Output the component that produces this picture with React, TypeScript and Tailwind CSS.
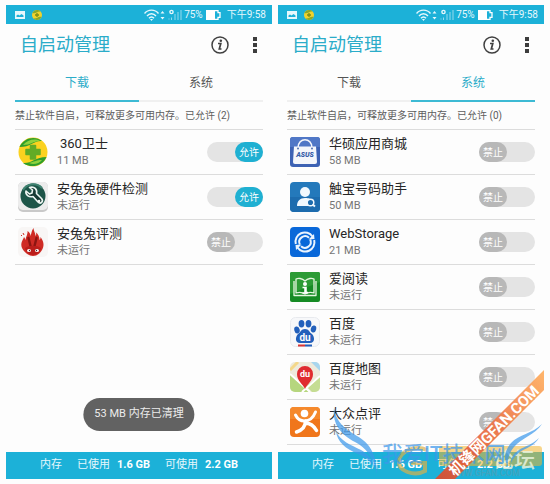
import React, { useState } from 'react';

type Tab = 'downloads' | 'system';

interface AppEntry {
  name: string;
  status: string;
  allowed: boolean;
  icon: React.ReactNode;
  indent?: boolean;
}

const Guard360Icon = () => (
  <svg viewBox="0 0 30 30" className="size-[30px]" aria-hidden="true">
    <circle cx="15" cy="15" r="14.5" fill="#fbd21f" />
    <path d="M1.500 10C5 1 17-2 24 4c-8-1-11 6-22.500 6z" fill="#2f9e2b" />
    <path d="M5 8C9 3 17 1 22 4c-7 0-9 4-17 4z" fill="#8ed23c" />
    <path d="M28.500 20C25 29 13 32 5 26c8 1 12-6 23.500-6z" fill="#2f9e2b" />
    <path d="M24 23c-3 4-9 5-13 3 5-1 7-3 13-3z" fill="#8ed23c" />
    <path d="M12.500 8.500h5v4H22v5h-4.500v4.500h-5v-4.500H8v-5h4.500z" fill="#62ab26" stroke="#62ab26" strokeWidth="1.500" strokeLinejoin="round" />
  </svg>
);

const WrenchIcon = () => (
  <svg viewBox="0 0 30 30" className="size-[30px]" aria-hidden="true">
    <rect x="0" y="0" width="30" height="30" rx="5" fill="#c9c9c9" />
    <rect x="0" y="0" width="30" height="28" rx="5" fill="#ececec" />
    <circle cx="15" cy="14" r="12.500" fill="#1d5548" />
    <path d="M5 8a12 12 0 0 1 19-2" fill="none" stroke="#3f8371" strokeWidth="2" />
    <path
      d="M8 9l3.500 3 2.500-1 .5-3-3-2.500c5-1.500 8 2 7 6l5 5c2.500 3-1 6-3.500 3.500l-5-5.500c-4 1-8-1.500-7-5.500z"
      fill="#183a34"
      stroke="#eef6f3"
      strokeWidth="1.600"
      strokeLinejoin="round"
    />
    <circle cx="21" cy="19" r="1.300" fill="#eef6f3" />
  </svg>
);

const AntutuIcon = () => (
  <svg viewBox="0 0 30 30" className="size-[30px]" aria-hidden="true">
    <rect width="30" height="30" rx="5" fill="#f8f6f5" />
    <path
      d="M4 21c-2-5 1-8 2-11 1 1 1 2 1.500 3C8 9 10 7 9.500 4c2 1 3 3 3 5 1-3 1-5 3-8 0 3 2 5 2 8 1-1 1-3 0-4 3 2 4 5 4 8 1-1 1-2 1-3 3 4 4 8 2 12-2 4-5 7-9.500 7S6 25 4 21z"
      fill="#cf2b25"
    />
    <path d="M10.500 11l2 8M18.500 11l-2 8" stroke="#8c1512" strokeWidth="2.400" strokeLinecap="round" />
    <path d="M7 21c4-3 12-3 16 0-1 4-4 7-8 7s-7-3-8-7z" fill="#bb1e1b" />
    <ellipse cx="11" cy="23.500" rx="2" ry="1.500" fill="#fff" />
    <ellipse cx="19" cy="23.500" rx="2" ry="1.500" fill="#fff" />
    <circle cx="11.500" cy="23.500" r=".7" fill="#333" />
    <circle cx="18.500" cy="23.500" r=".7" fill="#333" />
    <path d="M5 6l1 2M3 8l1 1" stroke="#cf2b25" strokeWidth="1" />
  </svg>
);

const AsusIcon = () => (
  <svg viewBox="0 0 30 30" className="size-[30px]" aria-hidden="true">
    <rect width="30" height="30" rx="3" fill="#3d62b4" />
    <path d="M0 3a3 3 0 0 1 3-3h24a3 3 0 0 1 3 3v7H0z" fill="#5077c6" />
    <path d="M4 9.500h22l1 15.500a2 2 0 0 1-2 2H5a2 2 0 0 1-2-2z" fill="#f4f6fb" />
    <path d="M8 11C8 0 22 0 22 11" fill="none" stroke="#f4f6fb" strokeWidth="1.600" />
    <circle cx="8" cy="11.500" r="1" fill="#5472b0" />
    <circle cx="22" cy="11.500" r="1" fill="#5472b0" />
    <text x="15" y="19.500" textAnchor="middle" fontSize="7" fontWeight="900" fontStyle="italic" fill="#365ca8">ASUS</text>
  </svg>
);

const ContactIcon = () => (
  <svg viewBox="0 0 30 30" className="size-[30px]" aria-hidden="true">
    <rect width="30" height="30" rx="4" fill="#2479bb" />
    <path d="M0 15h30v11a4 4 0 0 1-4 4H4a4 4 0 0 1-4-4z" fill="#1d6cae" />
    <circle cx="15" cy="10" r="5" fill="#f1f8fd" />
    <path d="M7 24c0-5 3-8 8-8s5 1 6 2l-3 6z" fill="#f1f8fd" />
    <circle cx="20.500" cy="20.500" r="3.300" fill="#1d6cae" stroke="#f1f8fd" strokeWidth="1.500" />
    <path d="M22.500 22.500l2.500 2" stroke="#f1f8fd" strokeWidth="2" />
  </svg>
);

const StorageIcon = () => (
  <svg viewBox="0 0 30 30" className="size-[30px]" aria-hidden="true">
    <rect width="30" height="30" rx="4" fill="#0968d9" />
    <g fill="none" stroke="#eaf4ff">
      <path d="M5.800 17A9.300 9.300 0 0 1 22.500 9.500M24.200 13A9.300 9.300 0 0 1 7.500 20.500" strokeWidth="2" />
      <path d="M9.800 17.500A5.800 5.800 0 0 1 19 10.800M20.200 12.500A5.800 5.800 0 0 1 11 19.200" strokeWidth="2" />
    </g>
    <path d="M18.500 12.500l6-.5-.5-5zM11.500 17.500l-6 .5.5 5z" fill="#eaf4ff" />
  </svg>
);

const ReaderIcon = () => (
  <svg viewBox="0 0 30 30" className="size-[30px]" aria-hidden="true">
    <rect width="30" height="30" rx="2" fill="#168b24" />
    <path d="M0 2a2 2 0 0 1 2-2h26a2 2 0 0 1 2 2v8L0 22z" fill="#2c9b35" />
    <g fill="none" stroke="#e5f6df" strokeWidth="1.300" strokeLinejoin="round">
      <path d="M15 9C12 6 8 6 6 7v14c3-1 6-1 9 1 3-2 6-2 9-1V7c-2-1-6-1-9 2z" />
      <path d="M4 9v14.500h22V9" />
    </g>
    <circle cx="15" cy="12" r="2" fill="#fff" />
    <path d="M12.500 15.500H16v5h2M15 16v5M12.500 21h5" stroke="#fff" strokeWidth="1.600" fill="none" />
  </svg>
);

const BaiduIcon = () => (
  <svg viewBox="0 0 30 30" className="size-[30px]" aria-hidden="true">
    <rect x=".5" y=".5" width="29" height="29" rx="5" fill="#f7f8fa" stroke="#e8eaee" />
    <g fill="#2360bb">
      <ellipse cx="7" cy="13" rx="2.700" ry="3.500" transform="rotate(-15 7 13)" />
      <ellipse cx="11.500" cy="6.700" rx="2.900" ry="3.700" />
      <ellipse cx="18.500" cy="6.700" rx="2.900" ry="3.700" />
      <ellipse cx="23.500" cy="12" rx="2.700" ry="3.500" transform="rotate(15 23.500 12)" />
      <path d="M15 12c4 0 4 3 7 5 3 3 3 9-2 9H10c-5 0-5-6-2-9 3-2 3-5 7-5z" />
    </g>
    <text x="15" y="24" textAnchor="middle" fontSize="10" fontWeight="700" fill="#fff">du</text>
    <path d="M8 28.500h7" stroke="#d93535" strokeWidth="2" />
    <path d="M15 28.500h7" stroke="#2360bb" strokeWidth="2" />
  </svg>
);

const MapIcon = () => (
  <svg viewBox="0 0 30 30" className="size-[30px]" aria-hidden="true">
    <clipPath id="map-clip"><rect width="30" height="30" rx="5" /></clipPath>
    <g clipPath="url(#map-clip)">
      <rect width="30" height="30" fill="#eeeadc" />
      <path d="M0 12l20 18H0z" fill="#b6d67e" />
      <path d="M30 14v16h-8l-6-6z" fill="#c5dd93" />
      <path d="M21 0h9v9z" fill="#a8d6ee" />
      <path d="M0 12l20 18M30 14L12 30" stroke="#fff" strokeWidth="2" />
      <path d="M0 8l8-8" stroke="#f4d88a" strokeWidth="3" />
    </g>
    <path d="M15 27c-2-5-8-8-8-15a8 8 0 0 1 16 0c0 7-6 10-8 15z" fill="#e02c30" />
    <text x="15" y="15" textAnchor="middle" fontSize="9" fontWeight="700" fill="#fff">du</text>
  </svg>
);

const DianpingIcon = () => (
  <svg viewBox="0 0 30 30" className="size-[30px]" aria-hidden="true">
    <rect width="30" height="30" rx="4" fill="#f0761b" />
    <path d="M0 4a4 4 0 0 1 4-4h22a4 4 0 0 1 4 4v8H0z" fill="#f5892c" />
    <circle cx="14.500" cy="6.500" r="3.800" fill="#fff" />
    <path d="M5.500 8c2 4 5 6 9 6 5 0 9-4 11-9" fill="none" stroke="#fff" strokeWidth="3" strokeLinecap="round" />
    <path d="M15.500 14c0 5-3 9-9 11M15 16c5 0 9 3 11.500 7.500" fill="none" stroke="#fff" strokeWidth="3.500" strokeLinecap="round" />
  </svg>
);

const DOWNLOADS: AppEntry[] = [
  { name: '360卫士', status: '11 MB', allowed: true, icon: <Guard360Icon />, indent: true },
  { name: '安兔兔硬件检测', status: '未运行', allowed: true, icon: <WrenchIcon /> },
  { name: '安兔兔评测', status: '未运行', allowed: false, icon: <AntutuIcon /> },
];

const SYSTEM: AppEntry[] = [
  { name: '华硕应用商城', status: '58 MB', allowed: false, icon: <AsusIcon /> },
  { name: '触宝号码助手', status: '50 MB', allowed: false, icon: <ContactIcon /> },
  { name: 'WebStorage', status: '21 MB', allowed: false, icon: <StorageIcon /> },
  { name: '爱阅读', status: '未运行', allowed: false, icon: <ReaderIcon /> },
  { name: '百度', status: '未运行', allowed: false, icon: <BaiduIcon /> },
  { name: '百度地图', status: '未运行', allowed: false, icon: <MapIcon /> },
  { name: '大众点评', status: '未运行', allowed: false, icon: <DianpingIcon /> },
];

const StatusBar = () => (
  <div className="flex h-[19px] items-center bg-[#1cb1d8] pr-[6px] pl-[9px] text-[10px] text-[#e6f7fc]">
    <svg viewBox="0 0 10 8" className="h-2 w-[10px]" aria-hidden="true">
      <rect width="10" height="8" fill="#e6f7fc" />
      <path d="M1.500 6V4.500l1.500-1 1.500 1L6.500 3l2 1.500V6z" fill="#1cb1d8" />
    </svg>
    <svg viewBox="0 0 12 10" className="ml-[6px] h-[10px] w-3" aria-hidden="true">
      <circle cx="6" cy="5" r="5" fill="#f1d22c" />
      <path d="M1.500 3C3 0 7-1 9.500 1.500 6 1 5 4 1.500 3zM10.500 7C9 10 5 11 2.500 8.500 6 9 7 6 10.500 7z" fill="#8aa82c" />
      <path d="M6 3v4M4 5h4" stroke="#7c8f17" strokeWidth="1.300" />
    </svg>
    <div className="ml-auto flex items-center">
      <svg viewBox="0 0 40 12" className="h-3 w-10" aria-hidden="true">
        <g fill="none" stroke="#e6f7fc" strokeWidth="1.400">
          <path d="M.5 4.500c3.500-4.500 10.500-4.500 14 0M3 7c2.500-3 6.500-3 9 0M5 9.300c1.500-1.800 3.500-1.800 5 0" />
          <circle cx="27.500" cy="3" r="1.600" />
        </g>
        <path d="M6 10h3l-1.500 2zM18.500 2l2 2.500h-4zM18.500 10.500l2-2.500h-4z" fill="#e6f7fc" />
        <path d="M25 9.500v1M27.500 8.500v2.500M31 5v6M34 3v8M37 1v10" stroke="#e6f7fc" strokeOpacity=".6" />
      </svg>
      <span>75%</span>
      <svg viewBox="0 0 15 10" className="ml-[3px] h-[10px] w-[15px]" aria-hidden="true">
        <path d="M0 0h9v10H0z" fill="#fff" />
        <path d="M9 .7h3v2h2v4.600h-2v2H9" fill="none" stroke="#fff" strokeWidth="1.300" />
      </svg>
      <span className="ml-[6px]">下午9:58</span>
    </div>
  </div>
);

const TitleBar = () => (
  <header className="flex h-[42px] items-center justify-between pr-[6px] pl-[5px]">
    <h1 className="text-[18px] leading-6 text-[#2bacc9]">自启动管理</h1>
    <div className="flex items-center gap-6">
      <button type="button" aria-label="信息">
        <svg viewBox="0 0 18 18" className="size-[18px]">
          <circle cx="9" cy="9" r="8" fill="none" stroke="#404040" strokeWidth="1.500" />
          <circle cx="9.800" cy="4.700" r="1.300" fill="#404040" />
          <path d="M7 7.500h2.800L8.300 13h2.200" fill="none" stroke="#404040" strokeWidth="1.700" />
        </svg>
      </button>
      <button type="button" aria-label="更多">
        <svg viewBox="0 0 4 16" className="h-4 w-1">
          <path d="M0 0h4v4H0zM0 6h4v4H0zM0 12h4v4H0z" fill="#3d3d3d" />
        </svg>
      </button>
    </div>
  </header>
);

interface TabButtonProps {
  label: string;
  active: boolean;
}

const TabButton: React.FC<TabButtonProps> = ({ label, active }) => (
  <button
    type="button"
    role="tab"
    aria-selected={active}
    className={`h-9 flex-1 border-b-2 text-[12px] ${active ? 'border-[#3dbad4] text-[#2bacc9]' : 'border-[#f0f0f0] text-[#555]'}`}
  >
    {label}
  </button>
);

const AppRow: React.FC<{ app: AppEntry }> = ({ app }) => {
  const [allowed, setAllowed] = useState(app.allowed);
  return (
    <li className="flex h-[45px] items-center border-b border-[#dcdcdc] pl-[3px]">
      {app.icon}
      <div className="ml-[9px] flex-1">
        <div className={`text-[13px] leading-[18px] text-[#262626] ${app.indent ? 'pl-[3px]' : ''}`}>{app.name}</div>
        <div className="text-[11px] leading-4 text-[#757575]">{app.status}</div>
      </div>
      <label className={`flex h-5 w-14 cursor-pointer rounded-full bg-[#e4e4e4] ${allowed ? 'justify-end' : 'justify-start'}`}>
        <input
          type="checkbox"
          aria-label={app.name}
          checked={allowed}
          onChange={e => setAllowed(e.target.checked)}
          className="sr-only"
        />
        <span className={`flex h-5 w-7 items-center justify-center rounded-full text-[10px] text-white ${allowed ? 'bg-[#1fb0d2]' : 'bg-[#b8b8b8]'}`}>
          {allowed ? '允许' : '禁止'}
        </span>
      </label>
    </li>
  );
};

interface PhoneProps {
  tab: Tab;
  apps: AppEntry[];
  allowedCount: number;
  children?: React.ReactNode;
}

const Phone: React.FC<PhoneProps> = ({ tab, apps, allowedCount, children }) => (
  <section className="relative flex min-w-0 flex-1 flex-col">
    <StatusBar />
    <div className="flex-1 px-[9px] pb-[7px]">
      <TitleBar />
      <div role="tablist" className="flex">
        <TabButton label="下载" active={tab === 'downloads'} />
        <TabButton label="系统" active={tab === 'system'} />
      </div>
      <p className="flex h-7 items-center border-b border-[#dcdcdc] text-[10px] whitespace-nowrap text-[#5e5e5e]">
        禁止软件自启，可释放更多可用内存。已允许 ({allowedCount})
      </p>
      <ul>
        {apps.map(app => <AppRow key={app.name} app={app} />)}
      </ul>
    </div>
    <footer className="flex h-[27px] items-center justify-center gap-[15px] bg-[#1cb1d8] text-[11px] text-[#e6f7fc]">
      <span>内存</span>
      <span>已使用<b className="ml-[7px] text-white">1.6 GB</b></span>
      <span>可使用<b className="ml-[7px] text-white">2.2 GB</b></span>
    </footer>
    {children}
  </section>
);

// Site stamp laid over the lower right corner
const Watermark = () => (
  <svg viewBox="0 0 215 109" className="pointer-events-none absolute right-0 bottom-0 h-[109px] w-[215px]">
    <rect x="110" y="76" width="103" height="20" rx="3" fill="#f2b52e" fillOpacity=".55" />
    <path d="M98 80c-12-5-27 1-28 11s15 16 26 10v-8H82" fill="none" stroke="#d9b04a" strokeOpacity=".7" strokeWidth="4" />
    <text x="164" y="97" fontSize="21" fontWeight="500" fill="#e8f2dc" fillOpacity=".85">论坛</text>
    <text x="120" y="106" fontSize="9" fontWeight="700" fill="#4f9fb4" fillOpacity=".7">WWW.GFAN.COM</text>
    <g fill="#3d98ea" fillOpacity=".72">
      <path d="M5 38c2 14 11 21 23 28 12 7 19 16 20 38-4-18-11-26-22-32C13 65 3 55 5 38z" />
      <path d="M7 61c4 10 15 14 25 19 7 4 11 9 13 16-5-6-10-10-16-12C17 79 8 72 7 61z" />
      <path d="M213 54c-7 11-21 14-28 23-5 6-7 13-6 20-5-9-3-17 3-24 8-9 21-9 31-19z" />
      <path d="M210 68c-5 8-13 10-19 14-4 3-7 6-9 11 0-6 3-10 8-13 6-4 13-5 20-12z" />
      <text x="53" y="91" fontSize="21" fontWeight="500">我爱IT技术网</text>
    </g>
    <linearGradient id="ribbon" x1="0" y1="1" x2="1" y2="0">
      <stop offset="0" stopColor="#dc4b2c" />
      <stop offset=".55" stopColor="#ee7848" />
      <stop offset="1" stopColor="#ffb060" />
    </linearGradient>
    <path d="M106 109L215 0v20l-89 89z" fill="url(#ribbon)" fillOpacity=".93" />
    <text transform="translate(126 107) rotate(-45)" fontSize="15" fontWeight="700" fill="#fff">机锋网GFAN.COM</text>
  </svg>
);

export default function App() {
  return (
    <main className="flex min-h-screen gap-[6px] bg-[#fdfdfd] px-[6px] py-[5px] font-[Roboto,'Noto_Sans_CJK_SC',sans-serif]">
      <Phone tab="downloads" apps={DOWNLOADS} allowedCount={2}>
        <div
          role="status"
          className="absolute bottom-12 left-1/2 flex h-[33px] -translate-x-1/2 items-center rounded-full bg-[#626262] px-[11px] text-[11px] whitespace-nowrap text-[#ececec]"
        >
          53 MB 内存已清理
        </div>
      </Phone>
      <Phone tab="system" apps={SYSTEM} allowedCount={0}>
        <Watermark />
      </Phone>
    </main>
  );
}
